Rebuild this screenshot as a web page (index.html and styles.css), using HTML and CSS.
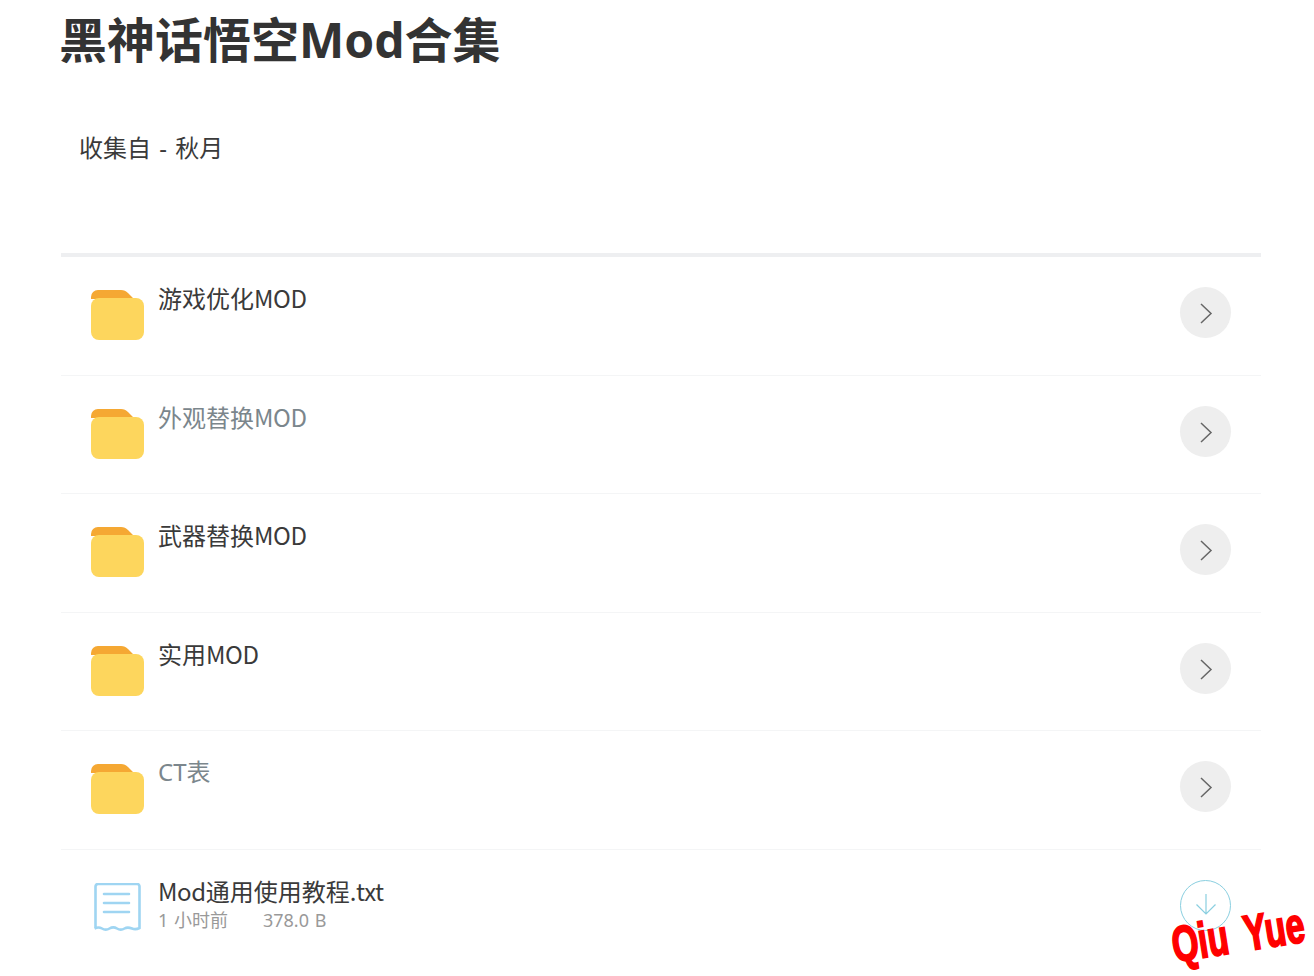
FILE: index.html
```html
<!DOCTYPE html>
<html>
<head>
    <title>黑神话悟空Mod合集</title>
    <meta charset="utf-8">
    <link rel="stylesheet" href="styles.css">
</head>
<body>
    <div class="container">
        <h1 class="title">黑神话悟空Mod合集</h1>
        <p class="desc">收集自 - 秋月</p>
        <div class="list">
            <div class="row">
                <svg class="folder" viewBox="0 0 53 50"><path fill="#F5A833" d="M0 30V7a7 7 0 0 1 7-7h23c3 0 5 1 7 3l6 6H0z"/><rect y="8" width="53" height="42" rx="8" fill="#FDD65D"/></svg>
                <div class="info"><a class="name">游戏优化<span class="latin">MOD</span></a></div>
                <div class="round"><svg viewBox="0 0 51 51"><path d="M21 17l10 9.500-10 9.500" class="chevron"/></svg></div>
            </div>
            <div class="row">
                <svg class="folder" viewBox="0 0 53 50"><path fill="#F5A833" d="M0 30V7a7 7 0 0 1 7-7h23c3 0 5 1 7 3l6 6H0z"/><rect y="8" width="53" height="42" rx="8" fill="#FDD65D"/></svg>
                <div class="info"><a class="name visited">外观替换<span class="latin">MOD</span></a></div>
                <div class="round"><svg viewBox="0 0 51 51"><path d="M21 17l10 9.500-10 9.500" class="chevron"/></svg></div>
            </div>
            <div class="row">
                <svg class="folder" viewBox="0 0 53 50"><path fill="#F5A833" d="M0 30V7a7 7 0 0 1 7-7h23c3 0 5 1 7 3l6 6H0z"/><rect y="8" width="53" height="42" rx="8" fill="#FDD65D"/></svg>
                <div class="info"><a class="name">武器替换<span class="latin">MOD</span></a></div>
                <div class="round"><svg viewBox="0 0 51 51"><path d="M21 17l10 9.500-10 9.500" class="chevron"/></svg></div>
            </div>
            <div class="row">
                <svg class="folder" viewBox="0 0 53 50"><path fill="#F5A833" d="M0 30V7a7 7 0 0 1 7-7h23c3 0 5 1 7 3l6 6H0z"/><rect y="8" width="53" height="42" rx="8" fill="#FDD65D"/></svg>
                <div class="info"><a class="name">实用<span class="latin">MOD</span></a></div>
                <div class="round"><svg viewBox="0 0 51 51"><path d="M21 17l10 9.500-10 9.500" class="chevron"/></svg></div>
            </div>
            <div class="row">
                <svg class="folder" viewBox="0 0 53 50"><path fill="#F5A833" d="M0 30V7a7 7 0 0 1 7-7h23c3 0 5 1 7 3l6 6H0z"/><rect y="8" width="53" height="42" rx="8" fill="#FDD65D"/></svg>
                <div class="info"><a class="name visited">CT表</a></div>
                <div class="round"><svg viewBox="0 0 51 51"><path d="M21 17l10 9.500-10 9.500" class="chevron"/></svg></div>
            </div>
            <div class="row last">
                <svg class="folder" viewBox="0 0 53 50"><path d="M4.500 45V3.500a2.500 2.500 0 0 1 2.500-2.500h39a2.500 2.500 0 0 1 2.500 2.500V45c-3 1.500-5 1.500-7.500 .5s-5-1.500-7.500 0-5 1.500-7.500 0-5-1.500-7.500 0-5 1.500-7.500 0-4.500-1.500-7.500 0z" class="doc"/><path d="M13 11h25M13 20h25M13 29h25" class="doc"/></svg>
                <div class="info">
                    <a class="name"><span class="latin">Mod</span>通用使用教程<span class="latin">.txt</span></a>
                    <div class="meta"><span>1 小时前</span><span>378.0 B</span></div>
                </div>
                <div class="round down"><svg viewBox="0 0 49 49"><path d="M25 13v20M15.500 23.500l9.500 9.500 9.500-9.500" class="arrow"/></svg></div>
            </div>
        </div>
    </div>
    <div class="mark"><span>Qiu</span><span>Yue</span></div>
</body>
</html>
```

FILE: styles.css
```css
*{
    box-sizing: border-box;
}
html,body{
    height:976px;
    overflow:hidden;
}
body{
    margin:0;
    background-color:#fff;
    color:#333;
    font-family:"Noto Sans","Noto Sans CJK SC",sans-serif;
    position:relative;
}
.container{
    width:1200px;
    margin-left:61px;
}
.title{
    margin:0 0 0 -2px;
    height:81px;
    font-size:48px;
    line-height:80px;
    font-weight:700;
}
.desc{
    margin:0;
    height:172px;
    padding:47px 0 0 18px;
    font-size:24px;
    line-height:40px;
    word-spacing:2px;
    color:#3a3a3a;
}
.list{
    border-top:4px solid #EEEFF1;
}
.row{
    height:118.5px;
    padding:0 30px;
    display:flex;
    align-items:flex-start;
    border-bottom:1px solid #F4F5F6;
}
.row.last{
    border-bottom:none;
}
.folder{
    width:53px;
    height:50px;
    margin-top:33px;
    flex:none;
}
.info{
    flex:1;
    margin-left:14px;
    margin-top:24px;
}
.name{
    display:block;
    font-size:24px;
    line-height:34px;
    color:#3a3a3a;
}
.name.visited{
    color:#7B868C;
}
.latin{
    font-family:"Noto Sans CJK SC",sans-serif;
    letter-spacing:-.4px;
}
.meta{
    display:flex;
    gap:35px;
    word-spacing:1px;
    font-size:18px;
    line-height:22px;
    color:#999;
}
.round{
    width:51px;
    height:51px;
    margin-top:30px;
    border-radius:50%;
    background-color:#EEE;
    flex:none;
}
.round svg{
    display:block;
    width:51px;
    height:51px;
}
.chevron{
    fill:none;
    stroke:#666;
    stroke-width:1.5;
}
.round.down{
    background:none;
    border:1px solid #8ACFE0;
}
.round.down svg{
    width:49px;
    height:49px;
}
.arrow{
    fill:none;
    stroke:#8ACFE0;
    stroke-width:1.2;
}
.doc{
    fill:none;
    stroke:#9FD5F2;
    stroke-width:2.600;
    stroke-linecap:round;
}
.mark{
    position:absolute;
    left:1145px;
    top:905px;
    width:186px;
    display:flex;
    justify-content:center;
    gap:24px;
    font-family:"Liberation Sans",sans-serif;
    font-weight:700;
    font-size:50px;
    line-height:60px;
    color:#F00;
    -webkit-text-stroke:2px #F00;
    transform:rotate(-9deg) scaleX(.68);
}
```
